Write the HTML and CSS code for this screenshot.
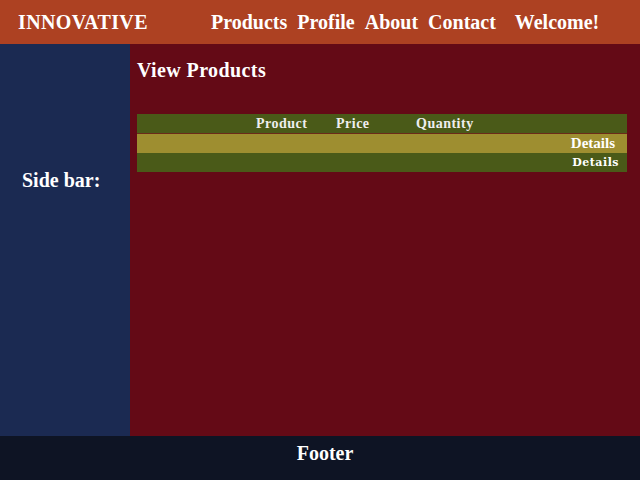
FILE: index.html
```html
<!DOCTYPE html>
<html lang="en">
<head>
    <meta charset="UTF-8">
    <title>Innovative - View Products</title>
    <link rel="stylesheet" href="styles.css">
</head>
<body>
    <div class="page">
        <header class="topbar">
            <div class="brand">INNOVATIVE</div>
            <nav class="nav">
                <a href="#">Products</a>
                <a href="#">Profile</a>
                <a href="#">About</a>
                <a href="#">Contact</a>
                <span class="welcome">Welcome!</span>
            </nav>
        </header>

        <div class="middle">
            <aside class="sidebar">Side bar:</aside>

            <main class="content">
                <h2>View Products</h2>
                <div class="products">
                    <div class="row head">
                        <span></span>
                        <span>Product</span>
                        <span>Price</span>
                        <span>Quantity</span>
                        <span></span>
                    </div>
                    <div class="row odd">
                        <span></span>
                        <span></span>
                        <span></span>
                        <span></span>
                        <a href="#" class="details">Details</a>
                    </div>
                    <div class="row even">
                        <span></span>
                        <span></span>
                        <span></span>
                        <span></span>
                        <a href="#" class="details small">Details</a>
                    </div>
                </div>
            </main>
        </div>

        <footer class="footer">Footer</footer>
    </div>
</body>
</html>
```

FILE: styles.css
```css
* {
    margin: 0;
    padding: 0;
    box-sizing: border-box;
}

body {
    font-family: 'Palatino Linotype', 'Book Antiqua', 'Liberation Serif', serif;
    font-weight: bold;
    color: #fff;
}

a {
    color: #fff;
    text-decoration: none;
}

.page {
    display: flex;
    flex-direction: column;
    width: 640px;
    height: 480px;
}

.topbar {
    height: 44px;
    background: #ad4122;
    display: flex;
    align-items: center;
    padding: 0 18px;
}

.brand {
    font-size: 20px;
    letter-spacing: 0.4px;
    width: 193px;
}

.nav {
    display: flex;
    gap: 10px;
    font-size: 20px;
}

.welcome {
    margin-left: 9px;
}

.middle {
    flex: 1;
    display: flex;
}

.sidebar {
    width: 130px;
    background: #1b2a52;
    font-size: 20px;
    padding: 125px 0 0 22px;
}

.content {
    flex: 1;
    background: #640a16;
    padding: 15px 13px 0 7px;
}

.content h2 {
    font-size: 20px;
    letter-spacing: 0.4px;
    margin-bottom: 32px;
}

.products {
    color: #eee;
}

.row {
    display: grid;
    grid-template-columns: 119px 80px 80px 120px 1fr;
    height: 19px;
    align-items: center;
    font-size: 14px;
    letter-spacing: 0.5px;
}

.head {
    background: #4a5a18;
    border-bottom: 1px solid #6b2a1a;
    height: 20px;
}

.odd {
    background: #9e8e30;
}

.even {
    background: #4a5a18;
}

.details {
    text-align: right;
    padding-right: 12px;
    font-size: 15px;
    letter-spacing: 0;
}

.details.small {
    font-family: 'DejaVu Serif', serif;
    font-size: 11px;
    letter-spacing: 0.5px;
    padding-right: 8px;
}

.footer {
    height: 44px;
    background: #0e1424;
    font-size: 20px;
    display: flex;
    justify-content: center;
    padding: 6px 0 0 10px;
}
```
